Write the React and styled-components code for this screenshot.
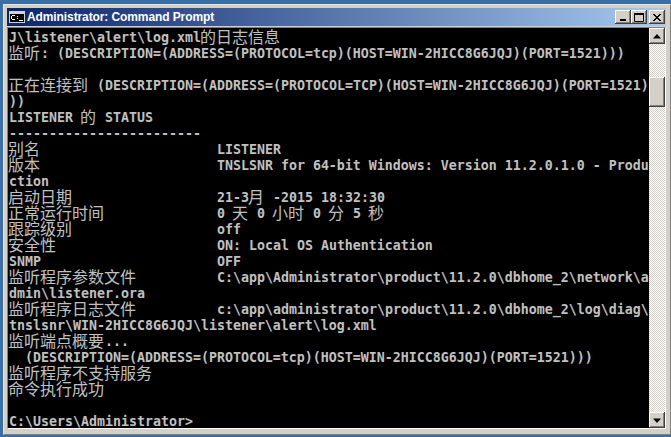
import React from "react";
import styled, { createGlobalStyle } from "styled-components";

const Global = createGlobalStyle`
  html, body { margin: 0; padding: 0; width: 671px; height: 437px; overflow: hidden; background: #3a6ea5; }
`;

const Desktop = styled.div`
  width: 671px;
  height: 437px;
  padding: 4px 0 2px 3px;
  box-sizing: border-box;
  background: #3a6ea5;
`;

const Window = styled.div`
  width: 668px;
  height: 431px;
  box-sizing: border-box;
  background: #d4d0c8;
  border: 1px solid;
  border-color: #e8e6e0 #808080 #808080 #e8e6e0;
  padding: 3px 4px 5px 3px;
  display: flex;
  flex-direction: column;
`;

const TitleBar = styled.div`
  height: 18px;
  flex: none;
  display: flex;
  align-items: center;
  padding: 0 1px 0 2px;
  gap: 2px;
  background: linear-gradient(90deg, #0a246a 0%, #a6caf0 100%);
`;

const Title = styled.div`
  flex: 1;
  font: bold 12px/16px "Liberation Sans", Arial, sans-serif;
  letter-spacing: -0.1px;
  color: #fff;
  white-space: nowrap;
`;

const CapButton = styled.div`
  width: 16px;
  height: 14px;
  flex: none;
  box-sizing: border-box;
  background: #d4d0c8;
  margin-right: ${(p) => (p.$tight ? "-2px" : "0")};
  box-shadow: inset -1px -1px 0 #404040, inset 1px 1px 0 #fff, inset -2px -2px 0 #808080;
  display: flex;
  align-items: center;
  justify-content: center;
`;

const Body = styled.div`
  flex: 1;
  min-height: 0;
  margin-top: 1px;
  display: flex;
  border: 1px solid;
  border-color: #808080 #fff #fff #808080;
`;

const Console = styled.div`
  flex: 1;
  min-width: 0;
  background: #000;
  overflow: hidden;
`;

const Line = styled.div`
  height: 16px;
  width: 641px;
  box-sizing: border-box;
  padding-left: 1px;
  white-space: pre;
  font: bold 13.29px/20px "DejaVu Sans Mono", "Liberation Mono", monospace;
  color: #c0c0c0;
`;

const Han = styled.span`
  font: 400 16px/16px "Noto Sans CJK SC", sans-serif;
  display: inline-block;
  height: 16px;
  vertical-align: top;
  margin: 0 1px 0 -1px;
`;

const ScrollBar = styled.div`
  width: 16px;
  flex: none;
  display: flex;
  flex-direction: column;
  background-color: #fff;
  background-image: conic-gradient(#d4d0c8 25%, #fff 0 50%, #d4d0c8 0 75%, #fff 0);
  background-size: 2px 2px;
`;

const ScrollButton = styled.div`
  width: 16px;
  height: 16px;
  flex: none;
  box-sizing: border-box;
  background: #d4d0c8;
  box-shadow: inset -1px -1px 0 #404040, inset 1px 1px 0 #fff, inset -2px -2px 0 #808080;
  display: flex;
  align-items: center;
  justify-content: center;
`;

const Track = styled.div`
  flex: 1;
  padding-top: ${(p) => p.$offset}px;
`;

const Thumb = styled.div`
  width: 16px;
  height: 30px;
  background: #d4d0c8;
  box-shadow: inset -1px -1px 0 #404040, inset 1px 1px 0 #fff, inset -2px -2px 0 #808080;
`;

const lines = [
  "J\\listener\\alert\\log.xml的日志信息",
  "监听: (DESCRIPTION=(ADDRESS=(PROTOCOL=tcp)(HOST=WIN-2HICC8G6JQJ)(PORT=1521)))",
  "",
  "正在连接到 (DESCRIPTION=(ADDRESS=(PROTOCOL=TCP)(HOST=WIN-2HICC8G6JQJ)(PORT=1521)",
  "))",
  "LISTENER 的 STATUS",
  "------------------------",
  "别名                      LISTENER",
  "版本                      TNSLSNR for 64-bit Windows: Version 11.2.0.1.0 - Produ",
  "ction",
  "启动日期                  21-3月 -2015 18:32:30",
  "正常运行时间              0 天 0 小时 0 分 5 秒",
  "跟踪级别                  off",
  "安全性                    ON: Local OS Authentication",
  "SNMP                      OFF",
  "监听程序参数文件          C:\\app\\Administrator\\product\\11.2.0\\dbhome_2\\network\\a",
  "dmin\\listener.ora",
  "监听程序日志文件          c:\\app\\administrator\\product\\11.2.0\\dbhome_2\\log\\diag\\",
  "tnslsnr\\WIN-2HICC8G6JQJ\\listener\\alert\\log.xml",
  "监听端点概要...",
  "  (DESCRIPTION=(ADDRESS=(PROTOCOL=tcp)(HOST=WIN-2HICC8G6JQJ)(PORT=1521)))",
  "监听程序不支持服务",
  "命令执行成功",
  "",
  "C:\\Users\\Administrator>",
];

const splitHan = (text) =>
  text.split(/([\u4e00-\u9fff]+)/).map((part, i) =>
    i % 2 ? <Han key={i}>{part}</Han> : part
  );

export default function App() {
  return (
    <Desktop>
      <Global />
      <Window>
        <TitleBar>
          <svg width="16" height="12" viewBox="0 0 16 12" shapeRendering="crispEdges">
            <rect x="0.5" y="0.5" width="15" height="11" fill="#000" stroke="#d4d0c8" />
            <rect x="1" y="1" width="14" height="2" fill="#c8d4e8" />
            <path d="M3 4h3M2 5h1M2 6h1M2 7h1M3 8h3M8 5h1M8 7h1M10 9h4" stroke="#fff" fill="none" transform="translate(0,0.5)" />
          </svg>
          <Title>Administrator: Command Prompt</Title>
          <CapButton $tight>
            <svg width="8" height="8" viewBox="0 0 8 8"><rect x="1" y="6" width="6" height="2" fill="#000" /></svg>
          </CapButton>
          <CapButton>
            <svg width="10" height="9" viewBox="0 0 10 9"><path d="M0.5 1.5h9v7h-9z" fill="none" stroke="#000" /><rect y="0" width="10" height="2" fill="#000" /></svg>
          </CapButton>
          <CapButton>
            <svg width="8" height="7" viewBox="0 0 8 7" shapeRendering="crispEdges"><path d="M0 0h2v1h1v1h2v-1h1v-1h2v1h-1v1h-1v1h-1v1h1v1h1v1h1v1h-2v-1h-1v-1h-2v1h-1v1h-2v-1h1v-1h1v-1h1v-1h-1v-1h-1v-1h-1z" fill="#000" /></svg>
          </CapButton>
        </TitleBar>
        <Body>
          <Console>
            {lines.map((l, i) => (
              <Line key={i}>{splitHan(l)}</Line>
            ))}
          </Console>
          <ScrollBar>
            <ScrollButton>
              <svg width="8" height="5" viewBox="0 0 8 5"><path d="M4 0l4 4.5H0z" fill="#000" /></svg>
            </ScrollButton>
            <Track $offset={33}><Thumb /></Track>
            <ScrollButton>
              <svg width="8" height="5" viewBox="0 0 8 5"><path d="M4 5L0 .5h8z" fill="#000" /></svg>
            </ScrollButton>
          </ScrollBar>
        </Body>
      </Window>
    </Desktop>
  );
}
